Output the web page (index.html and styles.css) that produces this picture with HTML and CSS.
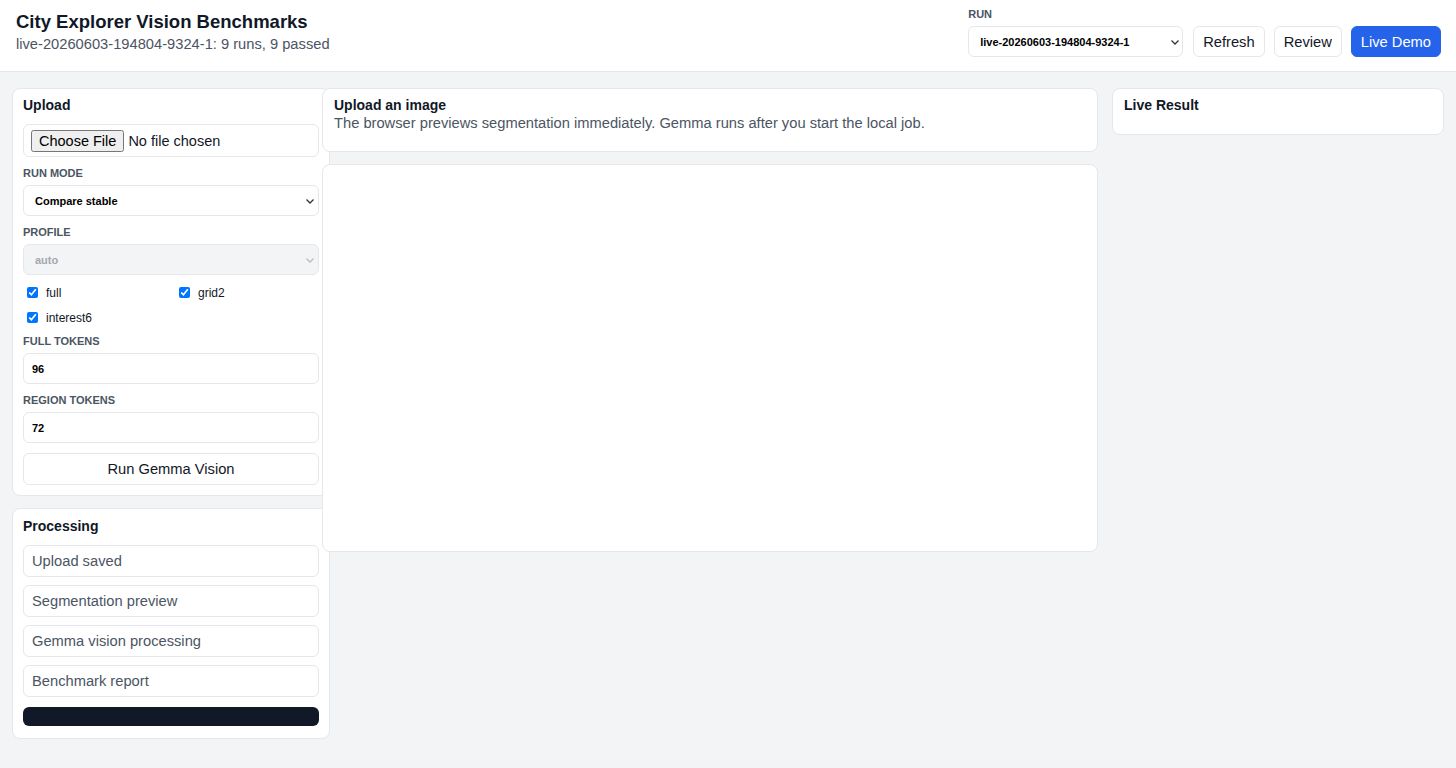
FILE: index.html
```html
<!DOCTYPE html>
<html lang="en">
  <head>
    <meta charset="UTF-8" />
    <meta name="viewport" content="width=device-width, initial-scale=1.0" />
    <title>City Explorer Vision Benchmarks</title>
    <link rel="stylesheet" href="styles.css">
  </head>
  <body>
    <header class="topbar">
      <div class="brand">
        <h1>City Explorer Vision Benchmarks</h1>
        <p id="run-summary">live-20260603-194804-9324-1: 9 runs, 9 passed</p>
      </div>
      <div class="toolbar">
        <label class="field run-field">
          <span>Run</span>
          <div class="select-wrap">
            <select id="run-select">
              <option>live-20260603-194804-9324-1</option>
            </select>
            <svg class="chevron" viewBox="0 0 8 5"><path d="M0.5 0.5 4 4 7.5 0.5" /></svg>
          </div>
        </label>
        <button class="btn">Refresh</button>
        <button class="btn">Review</button>
        <button class="btn btn-primary">Live Demo</button>
      </div>
    </header>

    <main class="layout">
      <aside class="sidebar">
        <section class="panel">
          <h2>Upload</h2>
          <div class="file-box">
            <input type="file" id="file-upload" accept="image/*" />
          </div>
          <label class="field">
            <span>Run mode</span>
            <div class="select-wrap">
              <select id="run-mode">
                <option>Compare stable</option>
              </select>
              <svg class="chevron" viewBox="0 0 8 5"><path d="M0.5 0.5 4 4 7.5 0.5" /></svg>
            </div>
          </label>
          <label class="field">
            <span>Profile</span>
            <div class="select-wrap is-disabled">
              <select id="profile" disabled>
                <option>auto</option>
              </select>
              <svg class="chevron" viewBox="0 0 8 5"><path d="M0.5 0.5 4 4 7.5 0.5" /></svg>
            </div>
          </label>
          <div class="checks">
            <label><input type="checkbox" checked /> full</label>
            <label><input type="checkbox" checked /> grid2</label>
            <label><input type="checkbox" checked /> interest6</label>
          </div>
          <label class="field">
            <span>Full tokens</span>
            <input type="number" value="96" />
          </label>
          <label class="field">
            <span>Region tokens</span>
            <input type="number" value="72" />
          </label>
          <button class="btn btn-wide">Run Gemma Vision</button>
        </section>

        <section class="panel panel-steps">
          <h2>Processing</h2>
          <ol class="steps">
            <li>Upload saved</li>
            <li>Segmentation preview</li>
            <li>Gemma vision processing</li>
            <li>Benchmark report</li>
          </ol>
          <div class="progress"></div>
        </section>
      </aside>

      <section class="stage">
        <div class="card card-head">
          <h2>Upload an image</h2>
          <p>The browser previews segmentation immediately. Gemma runs after you start the local job.</p>
        </div>
        <div class="card preview"></div>
      </section>

      <aside class="result">
        <div class="card card-head result-head">
          <h2>Live Result</h2>
        </div>
      </aside>
    </main>
  </body>
</html>
```

FILE: styles.css
```css
:root {
  --bg: #f3f4f6;
  --line: #e5e7eb;
  --text: #111827;
  --muted: #4b5563;
  --blue: #2563eb;
}
* {
  box-sizing: border-box;
}
body {
  margin: 0;
  font-family: "Liberation Sans", Arial, sans-serif;
  background: var(--bg);
  color: var(--text);
}
h1,
h2,
p {
  margin: 0;
}
.topbar {
  display: flex;
  justify-content: space-between;
  align-items: flex-start;
  background: #fff;
  border-bottom: 1px solid var(--line);
  padding: 8px 15px 14px 16px;
}
.brand {
  margin-top: 3px;
}
.brand h1 {
  font-size: 18.5px;
  line-height: 22px;
}
.brand p {
  font-size: 14.7px;
  line-height: 17px;
  color: var(--muted);
  margin-top: 3px;
}
.toolbar {
  display: flex;
  align-items: flex-end;
  gap: 9px;
}
.run-field {
  margin-right: 1px;
}
.run-field .select-wrap {
  width: 215px;
}
.run-field select {
  height: 31px;
}
.run-field .chevron {
  right: 4px;
}
.field {
  display: flex;
  flex-direction: column;
  gap: 6px;
}
.field span {
  font-size: 11px;
  line-height: 12px;
  font-weight: bold;
  text-transform: uppercase;
  color: var(--muted);
}
.select-wrap {
  position: relative;
}
.select-wrap select {
  width: 100%;
}
.chevron {
  position: absolute;
  right: 5px;
  top: 50%;
  width: 8px;
  height: 5px;
  margin-top: -2px;
  fill: none;
  stroke: #333;
  stroke-width: 1.3;
  pointer-events: none;
}
.is-disabled .chevron {
  stroke: #b8bcc4;
}
select,
input[type="number"] {
  height: 31px;
  border: 1px solid var(--line);
  border-radius: 6px;
  background: #fff;
  font-family: "Liberation Sans", Arial, sans-serif;
  font-size: 11px;
  font-weight: bold;
  color: #000;
  padding: 0 8px;
}
select {
  appearance: none;
  padding: 0 20px 0 11px;
}
select:disabled {
  background: var(--bg);
  color: #a3a7af;
  opacity: 1;
}
.btn {
  height: 31px;
  padding: 0 9px;
  border: 1px solid var(--line);
  border-radius: 6px;
  background: #fff;
  font-family: "Liberation Sans", Arial, sans-serif;
  font-size: 14.7px;
  color: var(--text);
  cursor: pointer;
}
.btn-primary {
  background: var(--blue);
  border-color: var(--blue);
  color: #fff;
}
.btn-wide {
  width: 100%;
  height: 32px;
}
.layout {
  display: grid;
  grid-template-columns: 298px minmax(0, 1fr) 332px;
  column-gap: 12px;
  align-items: start;
  padding: 16px 12px;
}
.sidebar {
  display: flex;
  flex-direction: column;
  gap: 12px;
}
.panel {
  width: 318px;
  display: flex;
  flex-direction: column;
  gap: 10px;
  background: #fff;
  border: 1px solid var(--line);
  border-radius: 8px;
  padding: 8px 10px 10px;
}
.panel-steps {
  padding: 9px 10px 12px;
}
.panel h2,
.card h2 {
  font-size: 14px;
  line-height: 17px;
}
.file-box {
  border: 1px solid var(--line);
  border-radius: 6px;
  padding: 5px 7px 4px;
}
.file-box input {
  font-family: "Liberation Sans", Arial, sans-serif;
  font-size: 14.5px;
}
.checks {
  display: grid;
  grid-template-columns: 1fr 1fr;
  column-gap: 8px;
  row-gap: 10px;
  font-size: 12px;
}
.checks label {
  display: flex;
  align-items: center;
  gap: 8px;
  height: 15px;
}
.checks input {
  margin: 0 0 0 4px;
  width: 11px;
  height: 11px;
}
.steps {
  list-style: none;
  margin: 0;
  padding: 0;
  display: flex;
  flex-direction: column;
  gap: 8px;
}
.steps li {
  height: 32px;
  display: flex;
  align-items: center;
  padding: 0 8px;
  border: 1px solid var(--line);
  border-radius: 6px;
  font-size: 14.7px;
  color: var(--muted);
}
.progress {
  height: 19px;
  border-radius: 6px;
  background: var(--text);
}
.stage {
  display: flex;
  flex-direction: column;
  gap: 12px;
  margin-right: 2px;
  position: relative;
}
.card {
  background: #fff;
  border: 1px solid var(--line);
  border-radius: 8px;
}
.card-head {
  padding: 8px 11px 19px;
}
.result-head {
  padding-bottom: 20px;
}
.card-head p {
  font-size: 14.7px;
  line-height: 17px;
  color: var(--muted);
  margin-top: 1px;
}
.preview {
  height: 388px;
}
```
